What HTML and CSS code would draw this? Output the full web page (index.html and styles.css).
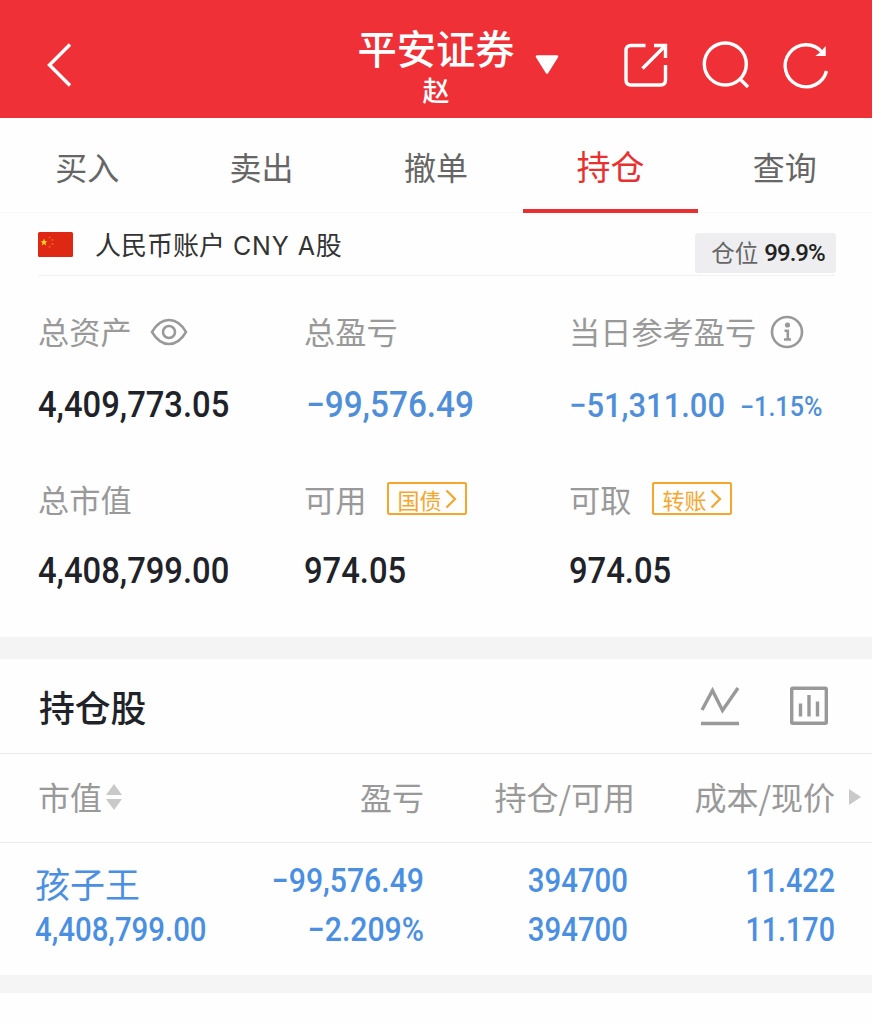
FILE: index.html
```html
<!DOCTYPE html>
<html lang="zh-CN">
<head>
<meta charset="utf-8">
<title>平安证券</title>
<link rel="stylesheet" href="styles.css">
</head>
<body>
<div class="app">
  <header class="top">
    <svg class="back" width="26" height="44" viewBox="0 0 26 44"><path d="M24 1.500L3.500 22L24 42.500"/></svg>
    <div class="heading">
      <div class="broker">平安证券</div>
      <div class="owner">赵</div>
    </div>
    <svg class="caret" width="24" height="20" viewBox="0 0 24 20"><path d="M2 1.500H22L12 17.500Z"/></svg>
    <div class="tools">
      <svg width="44" height="45" viewBox="0 0 44 45"><path d="M21.500 3.500H7Q2 3.500 2 8.500V38Q2 43 7 43H36.500Q41.500 43 41.500 38V23M30 3.500H41.500V16M41 4L18.500 26.500"/></svg>
      <svg width="48" height="48" viewBox="0 0 48 48"><circle cx="24.300" cy="22" r="21"/><path d="M39 37L47 45"/></svg>
      <svg width="46" height="48" viewBox="0 0 46 48"><path d="M44.500 29A21 21 0 1 1 40 10"/><path class="tip" d="M43 6V13.300H35.500L39 10.500Z"/></svg>
    </div>
  </header>

  <nav class="tabs">
    <a class="tab">买入</a>
    <a class="tab">卖出</a>
    <a class="tab">撤单</a>
    <a class="tab active">持仓</a>
    <a class="tab">查询</a>
  </nav>

  <section class="account">
    <svg class="flag" width="35" height="25" viewBox="0 0 35 25"><rect width="35" height="25" rx="1.500" fill="#df2814"/><path fill="#ffd91f" d="M6 6.500L7 9.200H9.500L7.500 10.800L8.200 13.500L6 11.900L3.800 13.500L4.500 10.800L2.500 9.200H5Z"/><g fill="#f0601c"><circle cx="11.500" cy="5.500" r="1"/><circle cx="14.500" cy="8" r="1"/><circle cx="14.500" cy="12" r="1"/><circle cx="11.500" cy="14.700" r="1"/></g></svg>
    <div class="account-name">人民币账户<span class="currency"> CNY A</span>股</div>
    <div class="ratio">仓位<b>99.9%</b></div>
  </section>

  <section class="metrics">
    <div class="label">总资产<svg class="eye" width="38" height="28" viewBox="0 0 38 28"><path d="M2 14Q9 2 19 2T36 14Q29 26 19 26T2 14Z"/><circle cx="19" cy="14" r="6"/></svg></div>
    <div class="label">总盈亏</div>
    <div class="label">当日参考盈亏<svg class="info" width="34" height="34" viewBox="0 0 34 34"><circle cx="17" cy="17" r="15"/><circle class="dot" cx="17.500" cy="10" r="2.600"/><path d="M14.500 15.800H17.800V24.500M14 24.500H21"/></svg></div>

    <div class="value"><span class="num">4,409,773.05</span></div>
    <div class="value loss total"><span class="num">−99,576.49</span></div>
    <div class="value loss daily"><span class="num">−51,311.00</span><span class="num pct">−1.15%</span></div>

    <div class="label second">总市值</div>
    <div class="label second">可用<a class="chip">国债<svg width="12" height="20" viewBox="0 0 12 20"><path d="M1.500 1.500L10 10L1.500 18.500"/></svg></a></div>
    <div class="label second">可取<a class="chip">转账<svg width="12" height="20" viewBox="0 0 12 20"><path d="M1.500 1.500L10 10L1.500 18.500"/></svg></a></div>

    <div class="value lower"><span class="num">4,408,799.00</span></div>
    <div class="value lower"><span class="num">974.05</span></div>
    <div class="value lower"><span class="num">974.05</span></div>
  </section>

  <div class="divider"></div>

  <section class="holdings-head">
    <h2>持仓股</h2>
    <svg width="40" height="40" viewBox="0 0 40 40"><path d="M2 24L12.500 4.500L22.500 24.500L38 2M1 37.500H39"/></svg>
    <svg class="chart" width="38" height="39" viewBox="0 0 38 39"><rect x="1.700" y="2.200" width="34.600" height="35" rx="1"/><path d="M10.500 17.500V30.500M19 9V30.500M27.500 15.500V30.500"/></svg>
  </section>

  <section class="columns">
    <div class="c1">市值<svg width="16" height="26" viewBox="0 0 16 26"><path d="M0 11L8 0L16 11ZM0 15H16L8 26Z"/></svg></div>
    <div class="c2">盈亏</div>
    <div class="c3">持仓/可用</div>
    <div class="c4">成本/现价</div>
    <svg class="more" width="12" height="16" viewBox="0 0 12 16"><path d="M0 0L12 8L0 16Z"/></svg>
  </section>

  <section class="stock">
    <div class="c1"><div class="name">孩子王</div><div class="num">4,408,799.00</div></div>
    <div class="c2"><div class="num">−99,576.49</div><div class="num">−2.209%</div></div>
    <div class="c3"><div class="num">394700</div><div class="num">394700</div></div>
    <div class="c4"><div class="num">11.422</div><div class="num">11.170</div></div>
  </section>
  <div class="divider last"></div>
</div>
</body>
</html>
```
FILE: styles.css
```css
* { box-sizing: border-box; }
body {
  margin: 0;
  background: #fefefe;
  font-family: "Noto Sans CJK SC", sans-serif;
  color: #1f2329;
}
svg { display: block; flex: none; fill: none; overflow: visible; }
.app { width: 872px; height: 1024px; overflow: hidden; }

/* Condensed figures */
.num {
  font-family: Roboto, sans-serif;
  font-weight: 500;
  font-kerning: none;
  transform: scaleX(0.910);
  transform-origin: left center;
}

.top {
  display: flex;
  height: 118px;
  background: #f03037;
  color: #fff;
}
.top svg { stroke: #fff; stroke-width: 3.400; }
.top .back { margin: 43px 0 0 46px; }
.heading { width: 160px; margin: 23px 0 0 284px; text-align: center; }
.broker { height: 49px; line-height: 47px; font-size: 39.300px; font-weight: 500; white-space: nowrap; }
.owner { height: 36px; line-height: 36px; font-size: 27px; font-weight: 500; }
.top .caret { margin: 55px 0 0 19px; fill: #fff; stroke-width: 2.500; stroke-linejoin: round; }
.tools { display: flex; gap: 33px; margin: 42px 0 0 65px; }
.top .tools .tip { fill: #fff; stroke-width: 1.500; }

.tabs { display: flex; height: 95px; border-bottom: 1px solid #f8f8f8; }
.tab {
  flex: 1;
  height: 95px;
  padding-top: 24px;
  text-align: center;
  font-size: 32px;
  line-height: 48px;
  color: #666;
}
.tab.active { border-bottom: 4px solid #e93030; color: #e93030; font-size: 34px; }

.account {
  display: flex;
  height: 63px;
  margin: 0 37px 0 38px;
  border-bottom: 1px solid #f2f2f2;
}
.flag { margin-top: 19px; }
.account-name { margin: 11px 0 0 22px; font-size: 26px; line-height: 40px; color: #333; white-space: pre; }
.currency { font-family: Inter, sans-serif; font-size: 25px; letter-spacing: 0.900px; }
.ratio {
  display: flex;
  justify-content: center;
  width: 141px;
  height: 40px;
  margin: 20px -1px 0 auto;
  padding-left: 5px;
  border-radius: 3px;
  background: #eeeef0;
  font-size: 23.500px;
  line-height: 38px;
  color: #666;
}
.ratio b { margin-left: 6px; font: 500 24px/41px Roboto, sans-serif; letter-spacing: -1px; color: #222; }

.metrics {
  display: grid;
  grid-template-columns: 266px 265px 1fr;
  grid-template-rows: 78px 95px 72px 116px;
  height: 361px;
  padding-left: 38px;
}
.label { display: flex; align-items: center; height: 44px; margin-top: 32px; font-size: 31.200px; color: #999; }
.label.second { margin-top: 27px; }
.eye { margin: 3px 0 0 18px; stroke: #999; stroke-width: 2.500; }
.info { margin: 3px 0 0 14px; stroke: #999; stroke-width: 2.600; }
.info .dot { fill: #999; stroke: none; }
.value {
  display: flex;
  align-items: center;
  height: 44px;
  margin-top: 29px;
  font-size: 36px;
  line-height: 44px;
}
.value.lower { margin-top: 28px; }
.value.loss { color: #4f8fda; }
.value.total .num { margin-left: 2px; transform: scaleX(0.925); }
.value.daily { font-size: 34px; }
.value .pct { margin: 4px 0 0 0; font-size: 27px; transform: scaleX(0.930); }
.chip {
  display: flex;
  align-items: center;
  justify-content: center;
  gap: 4px;
  width: 80px;
  height: 33px;
  margin: 1px 0 0 21px;
  border: 2px solid #f8a52c;
  border-radius: 2px;
  font-size: 22px;
  line-height: 26px;
  color: #f8a52c;
}
.chip svg { stroke: #f8a52c; stroke-width: 2.200; }

.divider { height: 22px; background: #f4f4f4; }
.holdings-head {
  display: flex;
  align-items: center;
  height: 95px;
  padding: 0 44px 0 39px;
  border-bottom: 1px solid #ebebeb;
}
.holdings-head h2 { margin: 0 auto 0 0; font-size: 35.800px; line-height: 50px; font-weight: 500; }
.holdings-head svg { margin-top: -1px; stroke: #999; stroke-width: 3.400; }
.holdings-head .chart { margin-left: 50px; }

.columns, .stock { display: grid; grid-template-columns: 165px 221px 211px 200px 1fr; }
.columns {
  height: 89px;
  padding-left: 38px;
  border-bottom: 1px solid #ececec;
  font-size: 32px;
  line-height: 84px;
  color: #999;
}
.columns .c1 { display: flex; height: 84px; align-items: center; }
.columns svg { fill: #c9c9c9; }
.columns .c1 svg { margin: 2px 0 0 4px; }
.columns .more { margin: 35px 0 0 14px; }
.c2, .c3, .c4 { text-align: right; }

.stock {
  height: 132px;
  padding: 13px 0 0 38px;
  font-size: 33px;
  line-height: 49px;
  color: #4a8fe2;
}
.stock .num { transform: scaleX(0.890); }
.stock .c1 { margin-left: -3px; }
.stock .c2 .num, .stock .c3 .num, .stock .c4 .num { transform-origin: right center; }
.stock .c2 .num { transform: scaleX(0.915); }
.stock .c3 { padding-right: 7px; }
.stock .c4 .num { transform: scaleX(0.870); }
.name { padding-top: 2px; height: 49px; font-size: 35px; }
.divider.last { height: 18px; background: #f5f5f5; }
```
